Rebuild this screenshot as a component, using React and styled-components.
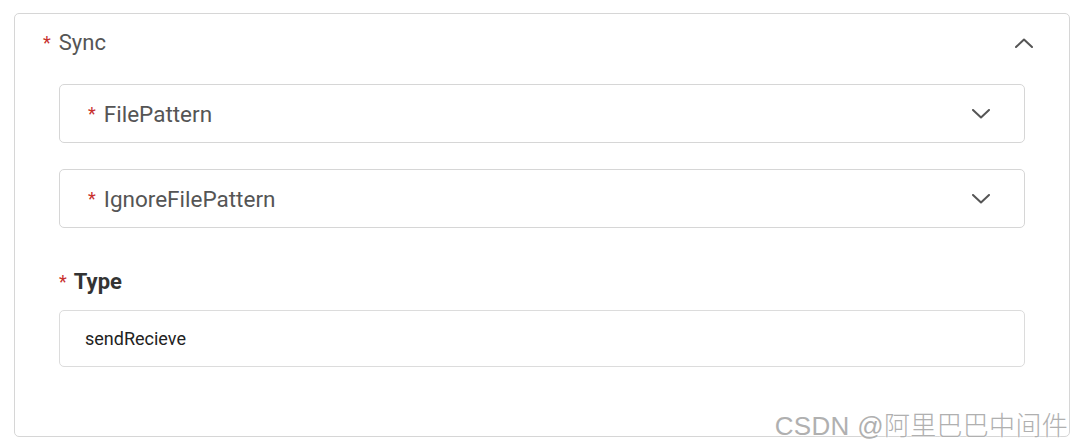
import React from "react";
import styled, { createGlobalStyle } from "styled-components";

const GlobalStyle = createGlobalStyle`
  body {
    margin: 0;
    background: #fff;
    font-family: Roboto, "Liberation Sans", sans-serif;
  }
`;

const Page = styled.div`
  position: relative;
  width: 1080px;
  height: 447px;
  padding: 13px 10px 0 14px;
  box-sizing: border-box;
`;

const Card = styled.section`
  height: 424px;
  box-sizing: border-box;
  border: 1px solid #d6d6d6;
  border-radius: 5px;
  display: flex;
  flex-direction: column;
`;

const Header = styled.div`
  height: 57px;
  display: flex;
  align-items: center;
  justify-content: space-between;
  padding: 0 36px 0 28px;
  margin-bottom: 13px;
`;

const Title = styled.div`
  display: flex;
  align-items: center;
  gap: 8px;
  font-size: 22px;
  color: #555;
`;

const Star = styled.span`
  color: #c8302d;
  font-size: 18px;
  font-weight: 400;
`;

const Body = styled.div`
  display: flex;
  flex-direction: column;
  padding: 0 44px;
`;

const Panel = styled.div`
  height: 59px;
  box-sizing: border-box;
  border: 1px solid #d6d6d6;
  border-radius: 5px;
  display: flex;
  align-items: center;
  justify-content: space-between;
  padding: 0 34px 0 28px;
  margin-bottom: 26px;
`;

const PanelLabel = styled.div`
  display: flex;
  align-items: center;
  gap: 8px;
  font-size: 22.5px;
  color: #555;
`;

const FieldLabel = styled.label`
  display: flex;
  align-items: center;
  gap: 7px;
  margin-top: 16px;
  font-size: 22px;
  font-weight: 700;
  color: #333;
  line-height: 24px;
`;

const Input = styled.div`
  margin-top: 16px;
  height: 57px;
  box-sizing: border-box;
  border: 1px solid #dcdcdc;
  border-radius: 5px;
  display: flex;
  align-items: center;
  padding: 0 25px;
  font-size: 18px;
  color: #222;
`;

const Watermark = styled.div`
  position: absolute;
  right: 12px;
  bottom: 5px;
  font-family: "Liberation Sans", "Noto Sans CJK SC", sans-serif;
  font-size: 26px;
  font-weight: 300;
  color: #b0b0b0;
  text-shadow: 0 0 2px #fff, 0 0 2px #fff;
  letter-spacing: 0.3px;
`;

const Chevron = ({ up }) => (
  <svg width="18" height="10" viewBox="0 0 18 10" fill="none">
    <path
      d={up ? "M1 9 L9 1.5 L17 9" : "M1 1 L9 8.5 L17 1"}
      stroke="#555"
      strokeWidth="2"
      strokeLinecap="round"
      strokeLinejoin="round"
    />
  </svg>
);

const PanelRow = ({ label }) => (
  <Panel>
    <PanelLabel>
      <Star>*</Star>
      {label}
    </PanelLabel>
    <Chevron />
  </Panel>
);

export default function App() {
  return (
    <Page>
      <GlobalStyle />
      <Card>
        <Header>
          <Title>
            <Star>*</Star>
            Sync
          </Title>
          <Chevron up />
        </Header>
        <Body>
          <PanelRow label="FilePattern" />
          <PanelRow label="IgnoreFilePattern" />
          <FieldLabel>
            <Star>*</Star>
            Type
          </FieldLabel>
          <Input>sendRecieve</Input>
        </Body>
      </Card>
      <Watermark>CSDN @阿里巴巴中间件</Watermark>
    </Page>
  );
}
